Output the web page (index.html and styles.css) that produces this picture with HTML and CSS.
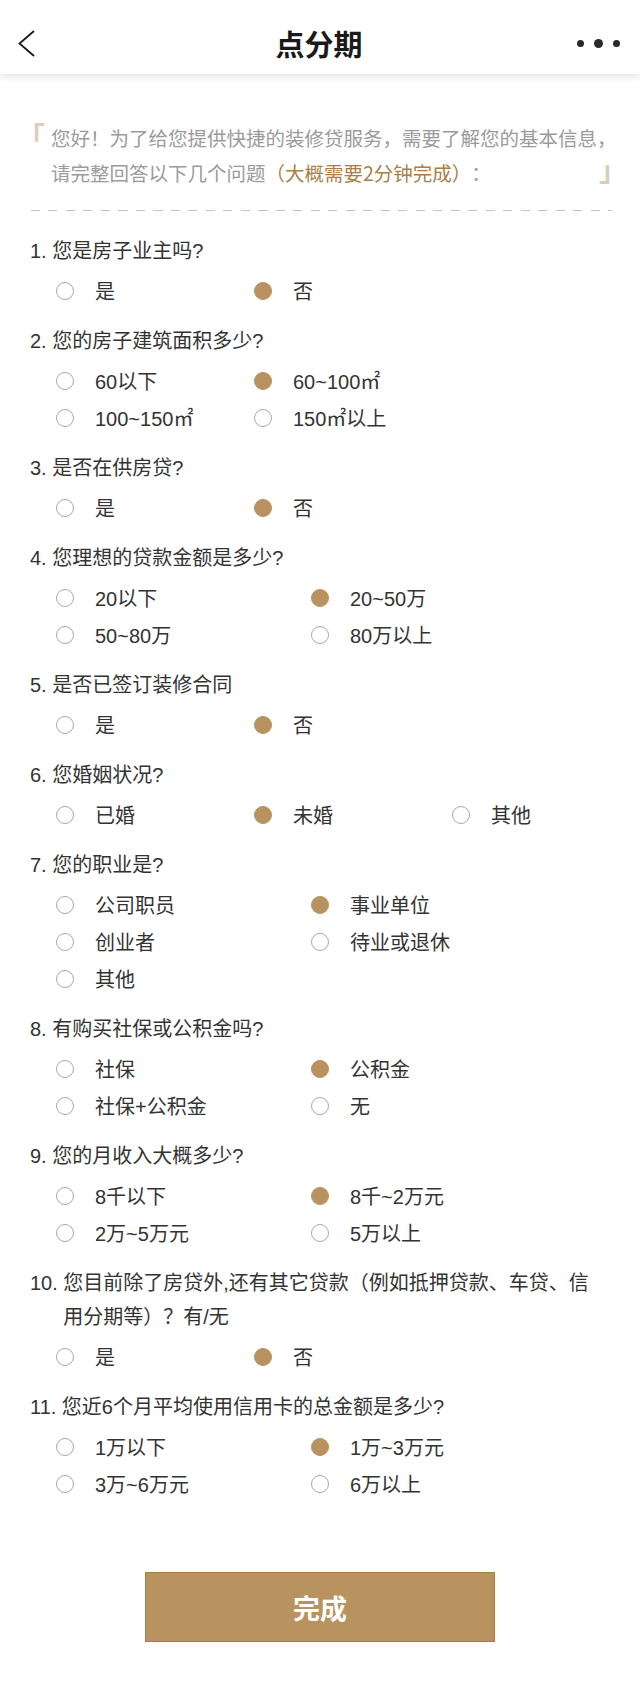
FILE: index.html
```html
<!DOCTYPE html>
<html lang="zh-CN">
<head>
<meta charset="utf-8">
<title>点分期</title>
<link rel="stylesheet" href="styles.css">
</head>
<body>
<header class="header">
  <div class="header-left">
    <svg class="back" width="18" height="28" viewBox="0 0 18 28"><path d="M16 1 L1.5 13.5 L16 26" fill="none" stroke="#1a1a1a" stroke-width="1.8"/></svg>
  </div>
  <h1 class="title">点分期</h1>
  <div class="header-right">
    <span class="dot"></span><span class="dot big"></span><span class="dot"></span>
  </div>
</header>

<section class="intro">
  <span class="mark open">「</span>
  <p class="intro-text">您好！为了给您提供快捷的装修贷服务，需要了解您的基本信息，请完整回答以下几个问题<span class="accent">（大概需要2分钟完成）</span>：</p>
  <span class="mark close">」</span>
</section>

<div class="dashed"></div>

<main class="form">
  <div class="question">
    <div class="q-title"><span class="q-num">1.</span><span class="q-text">您是房子业主吗?</span></div>
    <div class="options cols-a">
      <div class="opt"><span class="radio"></span>是</div>
      <div class="opt"><span class="radio on"></span>否</div>
    </div>
  </div>

  <div class="question">
    <div class="q-title"><span class="q-num">2.</span><span class="q-text">您的房子建筑面积多少?</span></div>
    <div class="options cols-a2">
      <div class="opt"><span class="radio"></span>60以下</div>
      <div class="opt"><span class="radio on"></span>60~100㎡</div>
      <div class="opt"><span class="radio"></span>100~150㎡</div>
      <div class="opt"><span class="radio"></span>150㎡以上</div>
    </div>
  </div>

  <div class="question">
    <div class="q-title"><span class="q-num">3.</span><span class="q-text">是否在供房贷?</span></div>
    <div class="options cols-a">
      <div class="opt"><span class="radio"></span>是</div>
      <div class="opt"><span class="radio on"></span>否</div>
    </div>
  </div>

  <div class="question">
    <div class="q-title"><span class="q-num">4.</span><span class="q-text">您理想的贷款金额是多少?</span></div>
    <div class="options cols-b">
      <div class="opt"><span class="radio"></span>20以下</div>
      <div class="opt"><span class="radio on"></span>20~50万</div>
      <div class="opt"><span class="radio"></span>50~80万</div>
      <div class="opt"><span class="radio"></span>80万以上</div>
    </div>
  </div>

  <div class="question">
    <div class="q-title"><span class="q-num">5.</span><span class="q-text">是否已签订装修合同</span></div>
    <div class="options cols-a">
      <div class="opt"><span class="radio"></span>是</div>
      <div class="opt"><span class="radio on"></span>否</div>
    </div>
  </div>

  <div class="question">
    <div class="q-title"><span class="q-num">6.</span><span class="q-text">您婚姻状况?</span></div>
    <div class="options cols-a">
      <div class="opt"><span class="radio"></span>已婚</div>
      <div class="opt"><span class="radio on"></span>未婚</div>
      <div class="opt"><span class="radio"></span>其他</div>
    </div>
  </div>

  <div class="question">
    <div class="q-title"><span class="q-num">7.</span><span class="q-text">您的职业是?</span></div>
    <div class="options cols-b">
      <div class="opt"><span class="radio"></span>公司职员</div>
      <div class="opt"><span class="radio on"></span>事业单位</div>
      <div class="opt"><span class="radio"></span>创业者</div>
      <div class="opt"><span class="radio"></span>待业或退休</div>
      <div class="opt"><span class="radio"></span>其他</div>
    </div>
  </div>

  <div class="question">
    <div class="q-title"><span class="q-num">8.</span><span class="q-text">有购买社保或公积金吗?</span></div>
    <div class="options cols-b">
      <div class="opt"><span class="radio"></span>社保</div>
      <div class="opt"><span class="radio on"></span>公积金</div>
      <div class="opt"><span class="radio"></span>社保+公积金</div>
      <div class="opt"><span class="radio"></span>无</div>
    </div>
  </div>

  <div class="question">
    <div class="q-title"><span class="q-num">9.</span><span class="q-text">您的月收入大概多少?</span></div>
    <div class="options cols-b">
      <div class="opt"><span class="radio"></span>8千以下</div>
      <div class="opt"><span class="radio on"></span>8千~2万元</div>
      <div class="opt"><span class="radio"></span>2万~5万元</div>
      <div class="opt"><span class="radio"></span>5万以上</div>
    </div>
  </div>

  <div class="question">
    <div class="q-title"><span class="q-num">10.</span><span class="q-text">您目前除了房贷外,还有其它贷款（例如抵押贷款、车贷、信用分期等）？有/无</span></div>
    <div class="options cols-a">
      <div class="opt"><span class="radio"></span>是</div>
      <div class="opt"><span class="radio on"></span>否</div>
    </div>
  </div>

  <div class="question">
    <div class="q-title"><span class="q-num">11.</span><span class="q-text">您近6个月平均使用信用卡的总金额是多少?</span></div>
    <div class="options cols-b">
      <div class="opt"><span class="radio"></span>1万以下</div>
      <div class="opt"><span class="radio on"></span>1万~3万元</div>
      <div class="opt"><span class="radio"></span>3万~6万元</div>
      <div class="opt"><span class="radio"></span>6万以上</div>
    </div>
  </div>

  <div class="actions">
    <button class="submit" type="button">完成</button>
  </div>
</main>
</body>
</html>
```

FILE: styles.css
```css
* { box-sizing: border-box; }

body {
  margin: 0;
  background: #ffffff;
  font-family: "Liberation Sans", "Noto Sans CJK SC", sans-serif;
  color: #333333;
  text-spacing-trim: space-all;
}

.header {
  height: 74px;
  padding: 12px 20px 0 18px;
  display: grid;
  grid-template-columns: 1fr auto 1fr;
  align-items: center;
  background: #ffffff;
  box-shadow: 0 3px 7px rgba(0, 0, 0, 0.1);
  position: relative;
  z-index: 1;
}

.header-left { display: flex; align-items: center; }
.back { display: block; margin-top: 2px; }

.title {
  margin: 0;
  font-family: "Noto Sans CJK SC", sans-serif;
  font-size: 29px;
  font-weight: 700;
  color: #1a1a1a;
  line-height: 40px;
}

.header-right {
  display: flex;
  justify-content: flex-end;
  align-items: center;
  gap: 10px;
}

.dot {
  width: 7px;
  height: 7px;
  border-radius: 50%;
  background: #2a2a2a;
}
.dot.big { width: 9px; height: 9px; }

.intro {
  position: relative;
  margin: 46px 19px 0 31px;
  padding-left: 20px;
}

.intro-text {
  margin: 0;
  font-family: "Noto Sans CJK SC", sans-serif;
  font-size: 19.5px;
  line-height: 35px;
  color: #9b9b9b;
  text-spacing-trim: space-all;
}

.accent { color: #a97f47; }

.mark {
  position: absolute;
  font-family: "Noto Sans CJK SC", sans-serif;
  font-size: 28px;
  line-height: 28px;
  font-weight: 700;
  color: #dccdb9;
}
.mark.open { left: -14px; top: 2px; }
.mark.close { right: -6px; bottom: 7px; }

.dashed {
  margin: 20px 28px 0 31px;
  height: 1px;
  background: repeating-linear-gradient(to right, #c4c4c4 0 9px, transparent 9px 17.5px);
}

.form {
  padding: 23px 40px 0 30px;
}

.question { margin-bottom: 15px; }

.q-title {
  display: flex;
  font-size: 20px;
  line-height: 34px;
  color: #333333;
}

.q-num { margin-right: 5.5px; flex: none; }
.q-text { flex: 1; }

.options {
  display: grid;
  margin-top: 4px;
  padding-left: 26px;
}
.cols-a { grid-template-columns: 198px 198px auto; }
.cols-a2 { grid-template-columns: 198px auto; }
.cols-b { grid-template-columns: 255px auto; }

.opt {
  display: flex;
  align-items: center;
  height: 37px;
  font-size: 20px;
  color: #333333;
  white-space: nowrap;
}

.radio {
  flex: none;
  width: 18px;
  height: 18px;
  border-radius: 50%;
  border: 1px solid #a8a8a8;
  margin-right: 21px;
}
.radio.on {
  background: #b8925f;
  border-color: #b8925f;
}

.actions {
  display: flex;
  justify-content: center;
  padding-top: 55px;
  padding-left: 10px;
}

.submit {
  width: 350px;
  height: 70px;
  background: #b8925f;
  border: 1px solid #a67a40;
  border-radius: 0;
  color: #ffffff;
  font-family: "Noto Sans CJK SC", sans-serif;
  font-size: 27px;
  font-weight: 700;
  padding: 0;
}
```
